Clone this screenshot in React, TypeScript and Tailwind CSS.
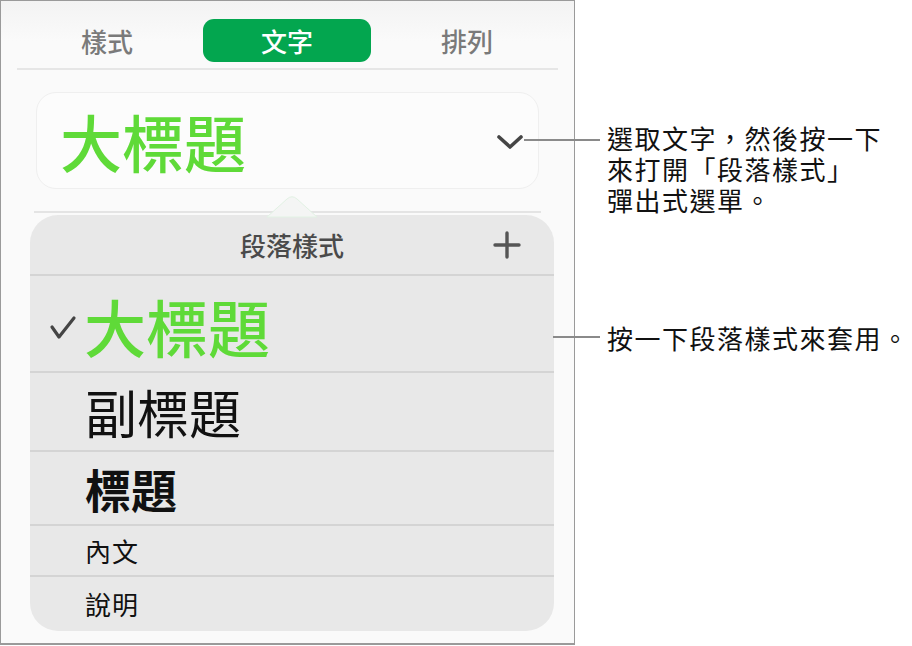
import React from "react";

const font = { fontFamily: '"Noto Sans CJK TC", "Noto Sans", sans-serif' };

function Sep({ cls }: { cls: string }) {
  return <div className={cls} />;
}

export default function App() {
  return (
    <div
      className="relative w-[912px] h-[646px] bg-white flex text-[#111]"
      style={font}
    >
      {/* Panel */}
      <div className="relative w-[575px] h-[645px] border border-[#9a9a9a] border-b-2 bg-[#fafafa] flex flex-col shrink-0">
        <div className="absolute left-0 right-0 top-0 h-[40px] bg-gradient-to-b from-[#f3f3f3] to-[#fafafa]" />
        {/* Tabs */}
        <div className="relative flex px-[16px] pt-[18px]">
          <div className="w-[180px] h-[43px] flex items-center justify-center text-[26px] font-medium text-[#7a7a7a] leading-none">
            樣式
          </div>
          <div className="w-[168px] mx-[6px] h-[43px] rounded-[11px] bg-[#03a64f] flex items-center justify-center text-[26px] font-medium text-white leading-none">
            文字
          </div>
          <div className="w-[180px] h-[43px] flex items-center justify-center text-[26px] font-medium text-[#7a7a7a] leading-none">
            排列
          </div>
        </div>
        <Sep cls="relative mt-[6px] mx-[16px] h-[2px] bg-[#e6e6e6]" />

        {/* Style card */}
        <div className="relative mt-[22px] mx-[35px] h-[97px] rounded-[20px] border border-[#efefef] bg-[#fcfcfc] flex items-center justify-between pl-[23px] pr-[15px]">
          <span className="text-[62px] leading-none font-medium text-[#5fda38]">大標題</span>
          <svg width="26" height="16" viewBox="0 0 26 16" className="mt-[2px]">
            <polyline
              points="2,3 13,13 24,3"
              fill="none"
              stroke="#454545"
              strokeWidth="3.6"
              strokeLinecap="round"
              strokeLinejoin="round"
            />
          </svg>
        </div>

        <Sep cls="mt-[22px] ml-[33px] mr-[33px] h-[2px] bg-[#e4e4e4]" />

        {/* Popover */}
        <div className="mt-[2px] ml-[29px] mr-[20px] h-[416px] rounded-[28px] bg-[#e8e8e8] overflow-hidden flex flex-col">
          <div className="relative h-[59px] flex items-center justify-center text-[26px] font-medium text-[#4a4a4a] leading-none">
            段落樣式
            <svg
              width="28"
              height="28"
              viewBox="0 0 28 28"
              className="absolute right-[33px] top-[16px]"
            >
              <path
                d="M14 2 V26 M2 14 H26"
                stroke="#555"
                strokeWidth="3.4"
                strokeLinecap="round"
              />
            </svg>
          </div>
          <Sep cls="h-[2px] bg-[#d4d4d4]" />
          <div className="relative h-[95px] flex items-center pl-[54px]">
            <svg
              width="28"
              height="26"
              viewBox="0 0 28 26"
              className="absolute left-[19px] top-[39px]"
            >
              <polyline
                points="3,12 10,22 25,3"
                fill="none"
                stroke="#444"
                strokeWidth="3.2"
                strokeLinecap="round"
                strokeLinejoin="round"
              />
            </svg>
            <span className="text-[62px] leading-none font-medium text-[#5fda38] mt-[4px]">
              大標題
            </span>
          </div>
          <Sep cls="h-[2px] bg-[#d4d4d4]" />
          <div className="h-[77px] flex items-center pl-[55px]">
            <span className="text-[52px] leading-none text-[#111]">副標題</span>
          </div>
          <Sep cls="h-[2px] bg-[#d4d4d4]" />
          <div className="h-[72px] flex items-center pl-[55px]">
            <span className="text-[46px] leading-none font-bold text-[#111]">
              標題
            </span>
          </div>
          <Sep cls="h-[2px] bg-[#d4d4d4]" />
          <div className="h-[49px] flex items-center pl-[55px]">
            <span className="text-[26px] leading-none text-[#111] tracking-[1px]">
              內文
            </span>
          </div>
          <Sep cls="h-[2px] bg-[#d4d4d4]" />
          <div className="h-[54px] flex items-center pl-[55px]">
            <span className="text-[26px] leading-none text-[#111] tracking-[1px]">
              說明
            </span>
          </div>
        </div>

        {/* Pointer triangle */}
        <svg
          width="52"
          height="24"
          viewBox="0 0 52 24"
          className="absolute left-[265px] top-[193px]"
        >
          <path
            d="M1 23 L21 5 Q26 0.5 31 5 L51 23 Z"
            fill="#f4f5f4"
            stroke="#e2f2e4"
            strokeWidth="1"
          />
        </svg>
      </div>

      {/* Callout lines */}
      <div className="absolute left-[524px] top-[139px] w-[76px] h-[2px] bg-[#8a8a8a]" />
      <div className="absolute left-[553px] top-[336px] w-[47px] h-[2px] bg-[#8a8a8a]" />

      {/* Annotations */}
      <div className="flex flex-col pl-[32px] pt-[122px] text-[26px] tracking-[1.5px] text-[#111]">
        <div className="flex flex-col">
          <div className="h-[31px] leading-[31px] whitespace-nowrap">選取文字，然後按一下</div>
          <div className="h-[31px] leading-[31px] whitespace-nowrap">來打開「段落樣式」</div>
          <div className="h-[31px] leading-[31px] whitespace-nowrap">彈出式選單。</div>
        </div>
        <div className="mt-[107px] h-[31px] leading-[31px] whitespace-nowrap">
          按一下段落樣式來套用。
        </div>
      </div>
    </div>
  );
}
